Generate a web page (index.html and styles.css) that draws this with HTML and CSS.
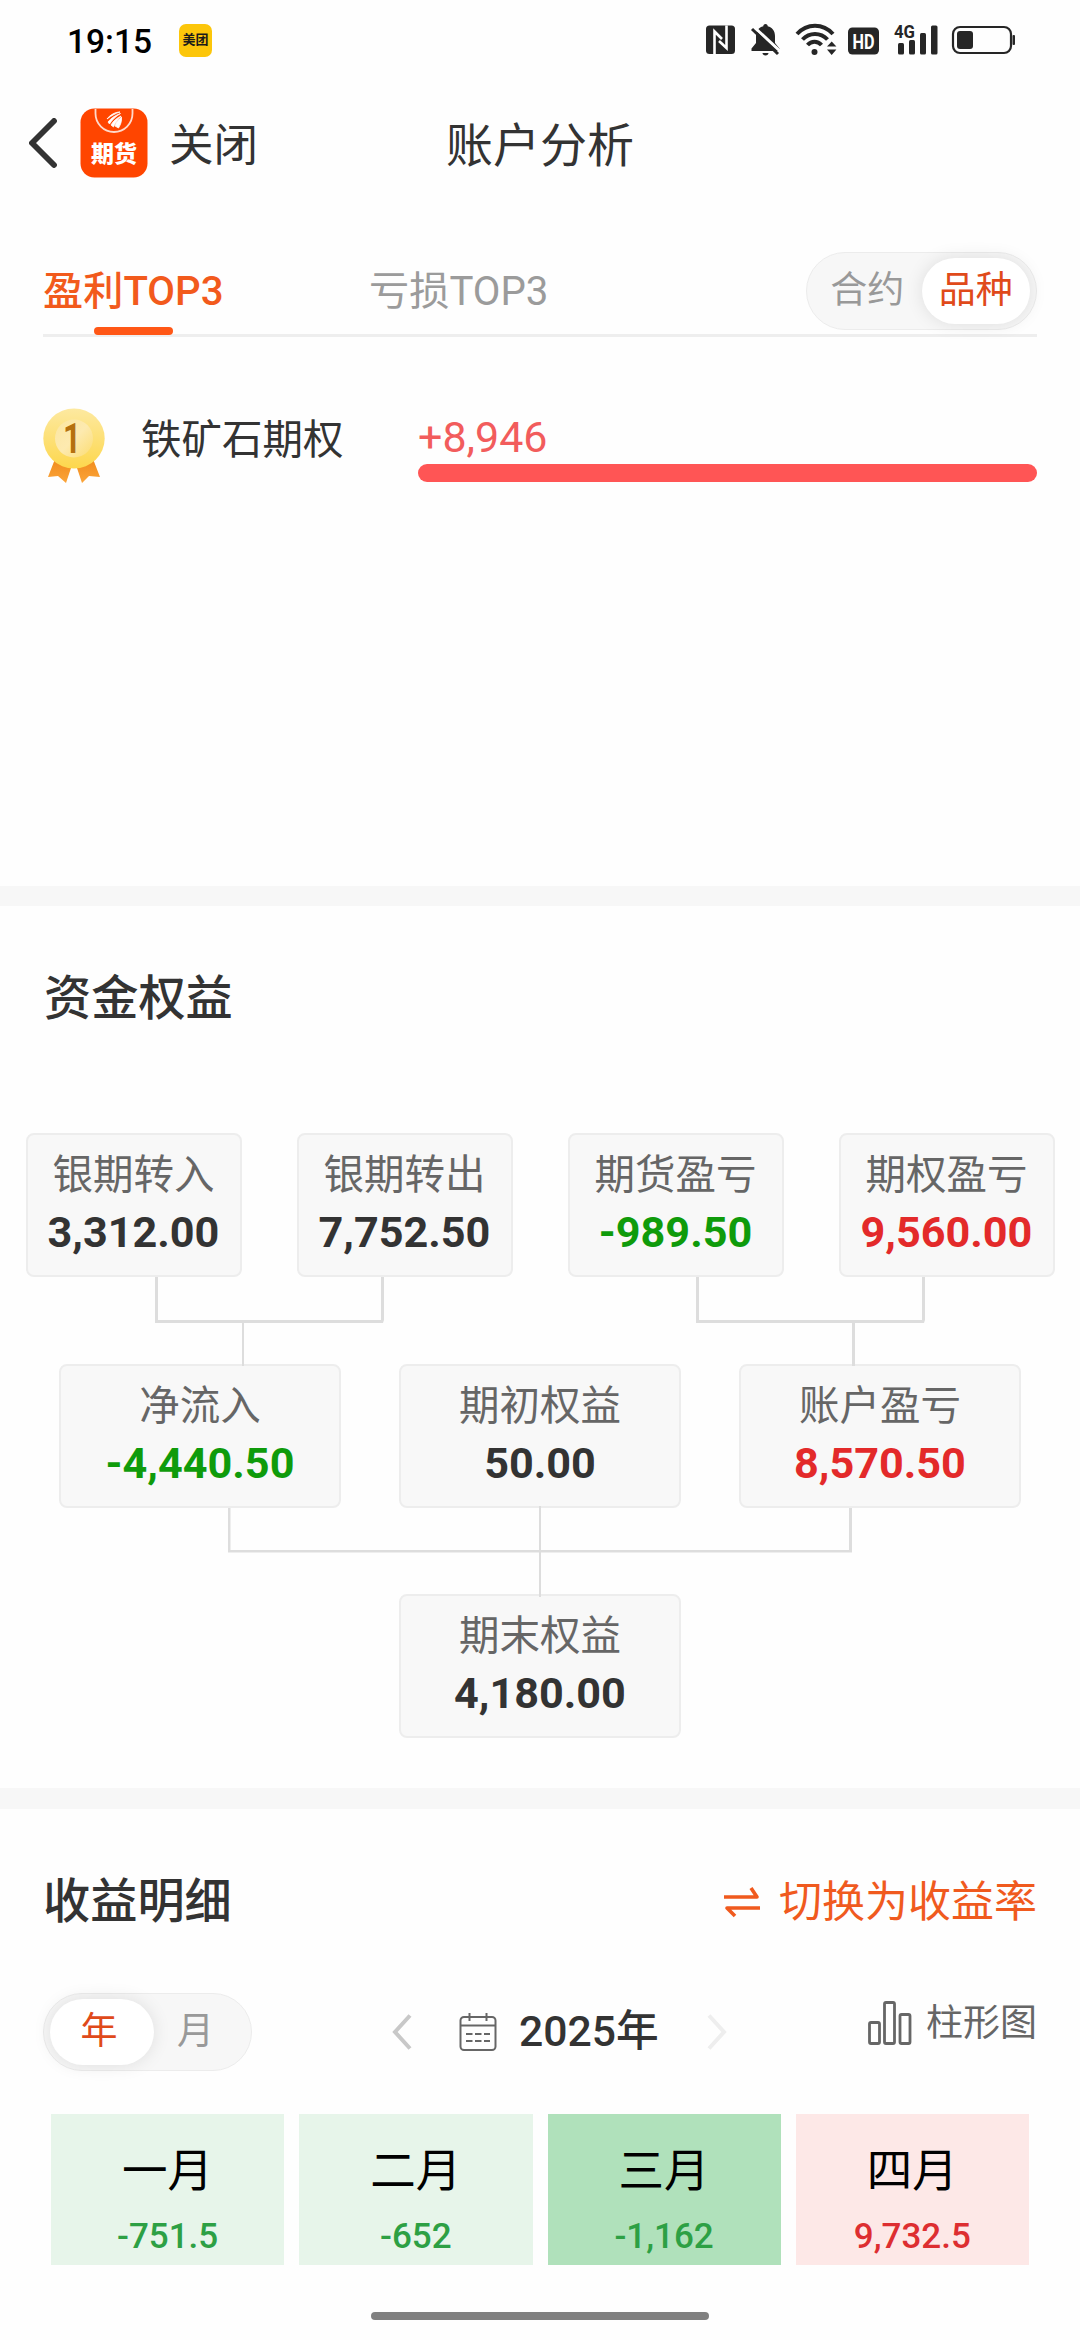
FILE: index.html
```html
<!DOCTYPE html>
<html lang="zh-CN">
<head>
  <meta charset="UTF-8" />
  <meta name="viewport" content="width=device-width, initial-scale=1.0"/>
  <title>账户分析</title>
  <link rel="stylesheet" href="styles.css">
</head>
<body>
  <div class="status-bar">
    <span class="time">19:15</span>
    <span class="meituan">美团</span>
    <svg class="status-icons" width="320" height="40" viewBox="700 20 320 40">
      <!-- nfc -->
      <rect x="705" y="25.500" width="29" height="28.500" rx="3.500" fill="#262626"/>
      <path d="M713.500 54V31.500L721 39M725.500 25.500V48L718 41" fill="none" stroke="#fff" stroke-width="2.600"/>
      <!-- muted bell -->
      <path d="M764.500 24c1.500 0 2.200 1 2.200 2.200 4.600 1.200 7.300 4.800 7.300 9.800v7l4.500 5.500V51h-28v-2.500L755 43v-7c0-5 2.700-8.600 7.300-9.800 0-1.200.7-2.200 2.200-2.200z" fill="#262626"/>
      <path d="M761.500 53h6c0 1.500-1.300 2.500-3 2.500s-3-1-3-2.500z" fill="#262626"/>
      <path d="M753 27l27 25" stroke="#fff" stroke-width="3" fill="none"/>
      <path d="M751 29l26 25" stroke="#262626" stroke-width="3" fill="none"/>
      <!-- wifi -->
      <g fill="none" stroke="#262626" stroke-width="4">
        <path d="M796 34c10-11 26-11 36 0"/>
        <path d="M801.500 39.500c7-7.500 18-7.500 25 0"/>
        <path d="M806.500 45c4-4.500 10-4.500 14 0"/>
      </g>
      <circle cx="813.500" cy="52" r="3" fill="#262626"/>
      <path d="M826 46.500l4.700-5 4.700 5zM826 49.500l4.700 5.500 4.700-5.500z" fill="#262626"/>
      <!-- hd -->
      <rect x="847" y="27.500" width="31" height="27" rx="4.500" fill="#262626"/>
      <text x="862.500" y="48.500" class="hd-text" textLength="22" lengthAdjust="spacingAndGlyphs">HD</text>
      <!-- signal -->
      <text x="893" y="37.500" class="net-text" textLength="21" lengthAdjust="spacingAndGlyphs">4G</text>
      <g fill="#262626">
        <rect x="897" y="43" width="6" height="11.500" rx="1.500"/>
        <rect x="908" y="40" width="6" height="14.500" rx="1.500"/>
        <rect x="919" y="33" width="6" height="21.500" rx="1.500"/>
        <rect x="930" y="25.500" width="6.500" height="29" rx="1.500"/>
      </g>
      <!-- battery -->
      <rect x="952" y="27" width="58" height="26" rx="7" fill="none" stroke="#262626" stroke-width="2.200"/>
      <rect x="956" y="31" width="16" height="18" rx="3" fill="#262626"/>
      <rect x="1011.500" y="35" width="2.500" height="10" rx="1" fill="#262626"/>
    </svg>
  </div>

  <header class="nav-bar">
    <div class="nav-left">
      <svg class="back" width="28" height="50" viewBox="0 0 28 50">
        <path d="M25 3L3 25l22 22" fill="none" stroke="#333" stroke-width="5.800" stroke-linecap="round"/>
      </svg>
      <svg class="app-logo" width="68" height="70" viewBox="0 0 68 70">
        <rect x=".5" y=".5" width="67" height="69" rx="14" fill="#ff4500"/>
        <path d="M15.500 1v4.500a18.500 18.500 0 0 0 37 0V1" fill="none" stroke="#ffd9cb" stroke-width="1.800"/>
        <path d="M27 11c3-4 8-7 13-7-4 1-9 4-13 7zM28 14c3-4 8-7 12.500-8.500C36 8 32 12 29.500 16zM31 17c2-4 6-7 10-9-3 3-6 7-7.500 11zM35 18c1-4 4-7 6.500-9 .5 4-1 8-3 11z" fill="#fff" stroke="#fff" stroke-width=".8"/>
        <text x="34" y="53.500" class="logo-text">期货</text>
      </svg>
      <span class="close">关闭</span>
    </div>
    <h1>账户分析</h1>
  </header>

  <section class="top-three">
    <div class="tabs">
      <a class="tab active">盈利TOP3</a>
      <a class="tab">亏损TOP3</a>
      <div class="toggle toggle-kind">
        <span>合约</span>
        <span class="on">品种</span>
      </div>
    </div>

    <div class="rank-row">
      <svg class="medal" width="62" height="76" viewBox="0 0 62 76">
        <defs>
          <linearGradient id="gold" x1="0" y1="0" x2="0" y2="1">
            <stop offset="0" stop-color="#fde9a0"/>
            <stop offset="1" stop-color="#fdd74d"/>
          </linearGradient>
          <linearGradient id="coin" x1="0" y1="0" x2="1" y2="1">
            <stop offset="0" stop-color="#fbe6a0"/>
            <stop offset=".5" stop-color="#fdeab0"/>
            <stop offset="1" stop-color="#fcdc70"/>
          </linearGradient>
          <linearGradient id="ribbon" x1="0" y1="0" x2="0" y2="1">
            <stop offset="0" stop-color="#f08a1c"/>
            <stop offset="1" stop-color="#fba53a"/>
          </linearGradient>
        </defs>
        <path d="M12 51L5 69l10-1 8 7 7-21zM50 51l7 18-11-1-7 7-7-21z" fill="url(#ribbon)"/>
        <ellipse cx="31" cy="30.500" rx="30.700" ry="30" fill="url(#gold)"/>
        <circle cx="31" cy="30.500" r="19" fill="url(#coin)"/>
        <text x="20" y="45" class="medal-num" textLength="18" lengthAdjust="spacingAndGlyphs">1</text>
      </svg>
      <span class="rank-name">铁矿石期权</span>
      <div class="rank-value">
        <span>+8,946</span>
        <div class="rank-bar" style="width: 100%"></div>
      </div>
    </div>
  </section>

  <section class="equity">
    <h2>资金权益</h2>

    <div class="tree">
      <div class="level level-four">
        <div class="node"><span>银期转入</span><b>3,312.00</b></div>
        <div class="node"><span>银期转出</span><b>7,752.50</b></div>
        <div class="node"><span>期货盈亏</span><b class="down">-989.50</b></div>
        <div class="node"><span>期权盈亏</span><b class="up">9,560.00</b></div>
      </div>
      <svg class="lines" width="1080" height="89" viewBox="0 0 1080 89" fill="#ddd">
        <path d="M155 0h3v43h223V0h3v43l-1 3H155z"/>
        <path d="M242 46h2v43h-2z"/>
        <path d="M696 0h3v43h223V0h3v43l-1 3H696z"/>
        <path d="M852 46h3v43h-3z"/>
      </svg>
      <div class="level">
        <div class="node"><span>净流入</span><b class="down">-4,440.50</b></div>
        <div class="node"><span>期初权益</span><b>50.00</b></div>
        <div class="node"><span>账户盈亏</span><b class="up">8,570.50</b></div>
      </div>
      <svg class="lines lines-end" width="1080" height="91" viewBox="0 0 1080 91" fill="#ddd">
        <path d="M228 2h2.500v42H849V2h3v44.500H228z"/>
        <path d="M539 0h2v91h-2z"/>
      </svg>
      <div class="level">
        <div class="node"><span>期末权益</span><b>4,180.00</b></div>
      </div>
    </div>
  </section>

  <section class="detail">
    <div class="detail-head">
      <h2>收益明细</h2>
      <a class="switch-rate">
        <svg width="38" height="32" viewBox="0 0 38 32" fill="none" stroke="#f05a1e" stroke-width="3.600" stroke-linejoin="round">
          <path d="M1 11h33L28 2M37 22H4l8 8"/>
        </svg>
        切换为收益率
      </a>
    </div>

    <div class="detail-bar">
      <div class="toggle toggle-period">
        <span class="on">年</span>
        <span>月</span>
      </div>
      <div class="year-picker">
        <svg width="20" height="36" viewBox="0 0 20 36"><path d="M18 1.500L3 18l15 16.500" fill="none" stroke="#c8c8c8" stroke-width="4"/></svg>
        <svg class="calendar" width="38" height="38" viewBox="0 0 38 38" fill="none" stroke="#666" stroke-width="2">
          <rect x="1.500" y="4" width="35" height="33" rx="3.500"/>
          <path d="M1.500 12.500h35M10.500 0v8M27.500 0v8"/>
          <path d="M7 21h6.500M16 21h6.500M25 21h6M7 28h6.500M16 28h6.500M25 28h6"/>
        </svg>
        <b>2025年</b>
        <svg width="20" height="36" viewBox="0 0 20 36"><path d="M2 1.500L17 18 2 34.500" fill="none" stroke="#eee" stroke-width="4"/></svg>
      </div>
      <a class="chart-link">
        <svg width="44" height="44" viewBox="0 0 44 44" fill="none" stroke="#666" stroke-width="2.800">
          <rect x="1.500" y="21.500" width="10" height="21" rx="1.500"/>
          <rect x="16.500" y="1.500" width="10" height="41" rx="1.500"/>
          <rect x="32" y="13.500" width="10" height="29" rx="1.500"/>
        </svg>
        <span>柱形图</span>
      </a>
    </div>

    <div class="months">
      <div class="month loss"><span>一月</span><b>-751.5</b></div>
      <div class="month loss"><span>二月</span><b>-652</b></div>
      <div class="month loss-deep"><span>三月</span><b>-1,162</b></div>
      <div class="month gain"><span>四月</span><b>9,732.5</b></div>
    </div>
  </section>

  <div class="home-bar"></div>
</body>
</html>
```
FILE: styles.css
```css
* {
  margin: 0;
  padding: 0;
  box-sizing: border-box;
}

body {
  width: 1080px;
  height: 2340px;
  overflow: hidden;
  display: flex;
  flex-direction: column;
  background-color: #fefefe;
  color: #333;
  font-family: Roboto, "Noto Sans CJK SC", sans-serif;
}

svg {
  display: block;
  flex-shrink: 0;
}

/* status bar */
.status-bar {
  height: 80px;
  padding: 0 59px 0 67px;
  display: flex;
  align-items: center;
}

.time {
  width: 112px;
  padding-top: 2px;
  font-size: 33.5px;
  font-weight: 500;
  color: #000;
}

.meituan {
  width: 33px;
  height: 33px;
  margin-top: 1px;
  border-radius: 7px;
  background-color: #fcc60a;
  color: #1a1a1a;
  font-size: 13px;
  font-weight: bold;
  line-height: 32px;
  text-align: center;
}

.status-icons {
  margin-left: auto;
}

.hd-text {
  font-size: 20px;
  font-weight: 700;
  fill: #fff;
  text-anchor: middle;
}

.net-text {
  font-size: 19px;
  font-weight: 700;
  fill: #262626;
}

/* nav */
.nav-bar {
  height: 126px;
  display: grid;
  grid-template-columns: 1fr auto 1fr;
  align-items: center;
}

.nav-left {
  display: flex;
  align-items: center;
  padding-left: 29px;
}

.app-logo {
  margin-left: 23px;
}

.logo-text {
  font-size: 23px;
  font-weight: 900;
  fill: #fff;
  text-anchor: middle;
}

.close {
  margin-left: 21px;
  padding-top: 6px;
  font-size: 44.5px;
  line-height: 60px;
}

.nav-bar h1 {
  padding-top: 6px;
  font-size: 47px;
  font-weight: 400;
  line-height: 60px;
}

/* top 3 */
.top-three {
  height: 680px;
  padding: 41px 43px 0 43px;
}

.tabs {
  height: 90px;
  border-bottom: 3px solid #eee;
  display: flex;
  align-items: flex-start;
}

.tab {
  position: relative;
  width: 326px;
  height: 90px;
  font-size: 40.2px;
  line-height: 89px;
  color: #9b9b9b;
}

.tab.active {
  color: #f25a1c;
  font-weight: 500;
}

.tab.active::after {
  content: "";
  position: absolute;
  left: 51px;
  top: 80px;
  width: 79px;
  height: 8px;
  border-radius: 4px;
  background-color: #ff5716;
}

.toggle {
  height: 78px;
  padding: 5px 6px;
  border: 1px solid #ececec;
  border-radius: 39px;
  background-color: #f7f7f7;
  display: flex;
}

.toggle span {
  flex: 1;
  border-radius: 33px;
  font-size: 37px;
  line-height: 65px;
  text-align: center;
  color: #999;
}

.toggle .on {
  background-color: #fff;
  color: #e04a1a;
  box-shadow: 0 0 18px rgba(0, 0, 0, 0.1);
}

.toggle-kind {
  width: 231px;
  margin-top: 5px;
  margin-left: auto;
}

.rank-row {
  margin-top: 66px;
  display: flex;
  align-items: flex-start;
}

.medal {
  margin-top: 5px;
}

.medal-num {
  font-size: 42px;
  font-weight: 700;
  fill: #b5700f;
}

.rank-name {
  width: 313px;
  padding-left: 36px;
  font-size: 40.5px;
  line-height: 74px;
}

.rank-value {
  flex: 1;
  font-size: 43px;
  line-height: 69px;
  color: #f25c5c;
}

.rank-value span {
  display: block;
  height: 61px;
}

.rank-bar {
  height: 18px;
  border-radius: 9px;
  background-color: #ff5555;
}

/* equity */
.equity {
  height: 902px;
  border-top: 20px solid #f7f7f7;
}

h2 {
  font-size: 47.2px;
  font-weight: 500;
  line-height: 60px;
}

.equity h2 {
  padding: 63px 0 0 44px;
}

.tree {
  margin-top: 104px;
}

.level {
  display: flex;
  justify-content: center;
  gap: 58px;
}

.node {
  width: 282px;
  height: 144px;
  border: 2px solid #ededed;
  border-radius: 8px;
  background-color: #f8f8f8;
  display: flex;
  flex-direction: column;
  align-items: center;
}

.level-four {
  gap: 55px;
}

.level-four .node {
  width: 216px;
}

.node span {
  padding-top: 12px;
  font-size: 40.5px;
  line-height: 57px;
  color: #666;
}

.node b {
  font-size: 43.2px;
  font-weight: 700;
  line-height: 57px;
}

.node .up {
  color: #e32a2a;
}

.node .down {
  color: #0f9b0b;
}

.lines {
  position: relative;
  margin-bottom: -2px;
}

.lines-end {
  margin-top: -2px;
  margin-bottom: -3px;
}

/* detail */
.detail {
  height: 524px;
  border-top: 21px solid #f7f7f7;
  padding-top: 63px;
}

.detail-head {
  display: flex;
  justify-content: space-between;
  align-items: center;
  padding: 0 43px;
}

.switch-rate {
  display: flex;
  align-items: center;
  gap: 18px;
  font-size: 43px;
  line-height: 58px;
  color: #f05a1e;
}

.detail-bar {
  margin-top: 61px;
  padding: 0 43px;
  height: 78px;
  display: flex;
  align-items: center;
}

.toggle-period {
  width: 209px;
}

.toggle-period .on {
  flex: 0 0 104px;
  padding-right: 6px;
}

.toggle-period span:last-child {
  padding-right: 8px;
}

.year-picker {
  margin-left: 140px;
  display: flex;
  align-items: center;
}

.calendar {
  margin-left: 47px;
}

.year-picker b {
  width: 188px;
  margin-left: 22px;
  padding-bottom: 2px;
  font-size: 42.7px;
  font-weight: 500;
  line-height: 58px;
}

.chart-link {
  margin-left: auto;
  margin-bottom: 18px;
  display: flex;
  align-items: center;
  gap: 14px;
  font-size: 37px;
  line-height: 54px;
  color: #666;
}

.chart-link span {
  padding-top: 2px;
}

.months {
  margin-top: 43px;
  padding: 0 51px;
  display: grid;
  grid-template-columns: repeat(4, 1fr);
  gap: 15px;
}

.month {
  height: 151px;
  display: flex;
  flex-direction: column;
  align-items: center;
}

.month span {
  padding-top: 25px;
  font-size: 45.5px;
  line-height: 66px;
  color: #000;
}

.month b {
  font-size: 35px;
  font-weight: 500;
  line-height: 64px;
}

.loss {
  background-color: #e7f5ea;
  color: #2da044;
}

.loss-deep {
  background-color: #b0e1bb;
  color: #2da044;
}

.gain {
  background-color: #fde8e7;
  color: #dd2e31;
}

.home-bar {
  width: 338px;
  height: 8px;
  border-radius: 4px;
  margin-left: 371px;
  background-color: #808080;
}
```
